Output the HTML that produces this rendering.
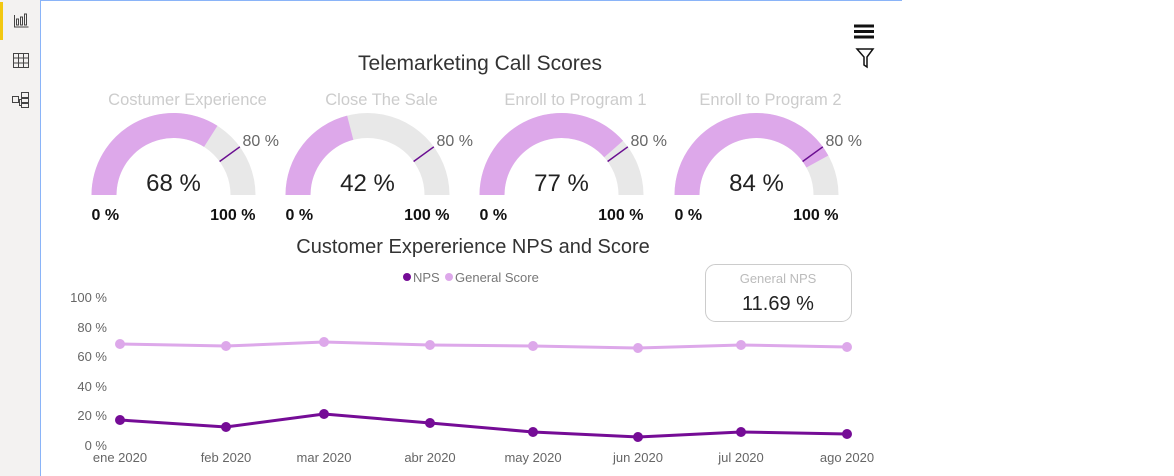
<!DOCTYPE html>
<html><head><meta charset="utf-8"><style>
body{margin:0;width:1174px;height:476px;background:#fff;overflow:hidden;font-family:"Liberation Sans",sans-serif}
#side{position:absolute;left:0;top:0;width:40px;height:476px;background:#f3f2f1;border-right:1px solid #8ab4f8}
#top{position:absolute;left:40px;top:0;width:862px;height:1px;background:#8ab4f8}
svg{position:absolute;left:0;top:0}
</style></head><body>
<div id="side"></div><div id="top"></div>
<svg width="1174" height="476" font-family="Liberation Sans, sans-serif">
<rect x="0" y="2" width="3" height="38" fill="#f2c811"/>
<g stroke="#444" fill="none" stroke-width="1">
<path d="M14.5 15v12h14M16.5 19v6h2v-6zM20.5 17v8h2v-8zM24.5 14v11h2v-11z"/>
<rect x="13.5" y="53.5" width="15" height="14"/><path d="M13.5 58h15M13.5 63h15M18.5 53.5v14M23.5 53.5v14"/>
<rect x="12.5" y="96.5" width="6" height="6"/><rect x="21.5" y="92.5" width="7" height="5"/><rect x="21.5" y="98.5" width="7" height="4"/><rect x="21.5" y="103.5" width="7" height="4"/><path d="M18.5 99.5h3M19.5 99.5v6h2"/>
</g>
<g stroke="#111" stroke-width="3"><path d="M854 26h20M854 31.5h20M854 37h20"/></g>
<path d="M857 49h16l-6 8v10l-3-2v-8z" fill="none" stroke="#111" stroke-width="1.5"/>
<text x="480" y="70" font-size="21" fill="#333" text-anchor="middle">Telemarketing Call Scores</text>
<g transform="translate(173.5,195)">
<path d="M-82 0A82 82 0 0 1 82 0L57 0A57 57 0 0 0 -57 0Z" fill="#e8e8e8"/>
<path d="M-82 0A82 82 0 0 1 43.94 -69.23L30.54 -48.13A57 57 0 0 0 -57 0Z" fill="#dda8ea"/>
<path d="M66.34 -48.2L46.11 -33.5" stroke="#6a0e91" stroke-width="1.5"/>
<text x="14" y="-90" font-size="16.5" fill="#ccc" text-anchor="middle">Costumer Experience</text>
<text x="0" y="-4" font-size="24" fill="#222" text-anchor="middle">68 %</text>
<text x="-82" y="25" font-size="16" fill="#111" font-weight="bold">0 %</text>
<text x="82" y="25" font-size="16" fill="#111" font-weight="bold" text-anchor="end">100 %</text>
<text x="69" y="-49" font-size="16" fill="#666">80 %</text>
</g>
<g transform="translate(367.5,195)">
<path d="M-82 0A82 82 0 0 1 82 0L57 0A57 57 0 0 0 -57 0Z" fill="#e8e8e8"/>
<path d="M-82 0A82 82 0 0 1 -20.39 -79.43L-14.18 -55.21A57 57 0 0 0 -57 0Z" fill="#dda8ea"/>
<path d="M66.34 -48.2L46.11 -33.5" stroke="#6a0e91" stroke-width="1.5"/>
<text x="14" y="-90" font-size="16.5" fill="#ccc" text-anchor="middle">Close The Sale</text>
<text x="0" y="-4" font-size="24" fill="#222" text-anchor="middle">42 %</text>
<text x="-82" y="25" font-size="16" fill="#111" font-weight="bold">0 %</text>
<text x="82" y="25" font-size="16" fill="#111" font-weight="bold" text-anchor="end">100 %</text>
<text x="69" y="-49" font-size="16" fill="#666">80 %</text>
</g>
<g transform="translate(561.5,195)">
<path d="M-82 0A82 82 0 0 1 82 0L57 0A57 57 0 0 0 -57 0Z" fill="#e8e8e8"/>
<path d="M-82 0A82 82 0 0 1 61.51 -54.23L42.76 -37.69A57 57 0 0 0 -57 0Z" fill="#dda8ea"/>
<path d="M66.34 -48.2L46.11 -33.5" stroke="#6a0e91" stroke-width="1.5"/>
<text x="14" y="-90" font-size="16.5" fill="#ccc" text-anchor="middle">Enroll to Program 1</text>
<text x="0" y="-4" font-size="24" fill="#222" text-anchor="middle">77 %</text>
<text x="-82" y="25" font-size="16" fill="#111" font-weight="bold">0 %</text>
<text x="82" y="25" font-size="16" fill="#111" font-weight="bold" text-anchor="end">100 %</text>
<text x="69" y="-49" font-size="16" fill="#666">80 %</text>
</g>
<g transform="translate(756.5,195)">
<path d="M-82 0A82 82 0 0 1 82 0L57 0A57 57 0 0 0 -57 0Z" fill="#e8e8e8"/>
<path d="M-82 0A82 82 0 0 1 71.86 -39.51L49.95 -27.46A57 57 0 0 0 -57 0Z" fill="#dda8ea"/>
<path d="M66.34 -48.2L46.11 -33.5" stroke="#6a0e91" stroke-width="1.5"/>
<text x="14" y="-90" font-size="16.5" fill="#ccc" text-anchor="middle">Enroll to Program 2</text>
<text x="0" y="-4" font-size="24" fill="#222" text-anchor="middle">84 %</text>
<text x="-82" y="25" font-size="16" fill="#111" font-weight="bold">0 %</text>
<text x="82" y="25" font-size="16" fill="#111" font-weight="bold" text-anchor="end">100 %</text>
<text x="69" y="-49" font-size="16" fill="#666">80 %</text>
</g>
<text x="473" y="253" font-size="20" fill="#333" text-anchor="middle">Customer Expererience NPS and Score</text>
<circle cx="407" cy="277" r="4" fill="#750c96"/><text x="413" y="282" font-size="13" fill="#777">NPS</text>
<circle cx="449" cy="277" r="4" fill="#dda8ea"/><text x="455" y="282" font-size="13" fill="#777">General Score</text>
<rect x="705.5" y="264.5" width="146" height="57" rx="10" fill="#fff" stroke="#ccc"/>
<text x="778" y="283" font-size="13" fill="#bbb" text-anchor="middle">General NPS</text>
<text x="778" y="310" font-size="20" fill="#222" text-anchor="middle">11.69 %</text>
<g font-size="13" fill="#666" text-anchor="end">
<text x="107" y="302">100 %</text><text x="107" y="332">80 %</text><text x="107" y="361">60 %</text><text x="107" y="391">40 %</text><text x="107" y="420">20 %</text><text x="107" y="450">0 %</text>
</g>
<g font-size="13" fill="#666" text-anchor="middle">
<text x="120" y="462">ene 2020</text><text x="226" y="462">feb 2020</text><text x="324" y="462">mar 2020</text><text x="430" y="462">abr 2020</text><text x="533" y="462">may 2020</text><text x="638" y="462">jun 2020</text><text x="741" y="462">jul 2020</text><text x="847" y="462">ago 2020</text>
</g>
<polyline points="120,344 226,346 324,342 430,345 533,346 638,348 741,345 847,347" fill="none" stroke="#dda8ea" stroke-width="3"/>
<g fill="#dda8ea"><circle cx="120" cy="344" r="5"/><circle cx="226" cy="346" r="5"/><circle cx="324" cy="342" r="5"/><circle cx="430" cy="345" r="5"/><circle cx="533" cy="346" r="5"/><circle cx="638" cy="348" r="5"/><circle cx="741" cy="345" r="5"/><circle cx="847" cy="347" r="5"/></g>
<polyline points="120,420 226,427 324,414 430,423 533,432 638,437 741,432 847,434" fill="none" stroke="#750c96" stroke-width="3"/>
<g fill="#750c96"><circle cx="120" cy="420" r="5"/><circle cx="226" cy="427" r="5"/><circle cx="324" cy="414" r="5"/><circle cx="430" cy="423" r="5"/><circle cx="533" cy="432" r="5"/><circle cx="638" cy="437" r="5"/><circle cx="741" cy="432" r="5"/><circle cx="847" cy="434" r="5"/></g>
</svg>
</body></html>
